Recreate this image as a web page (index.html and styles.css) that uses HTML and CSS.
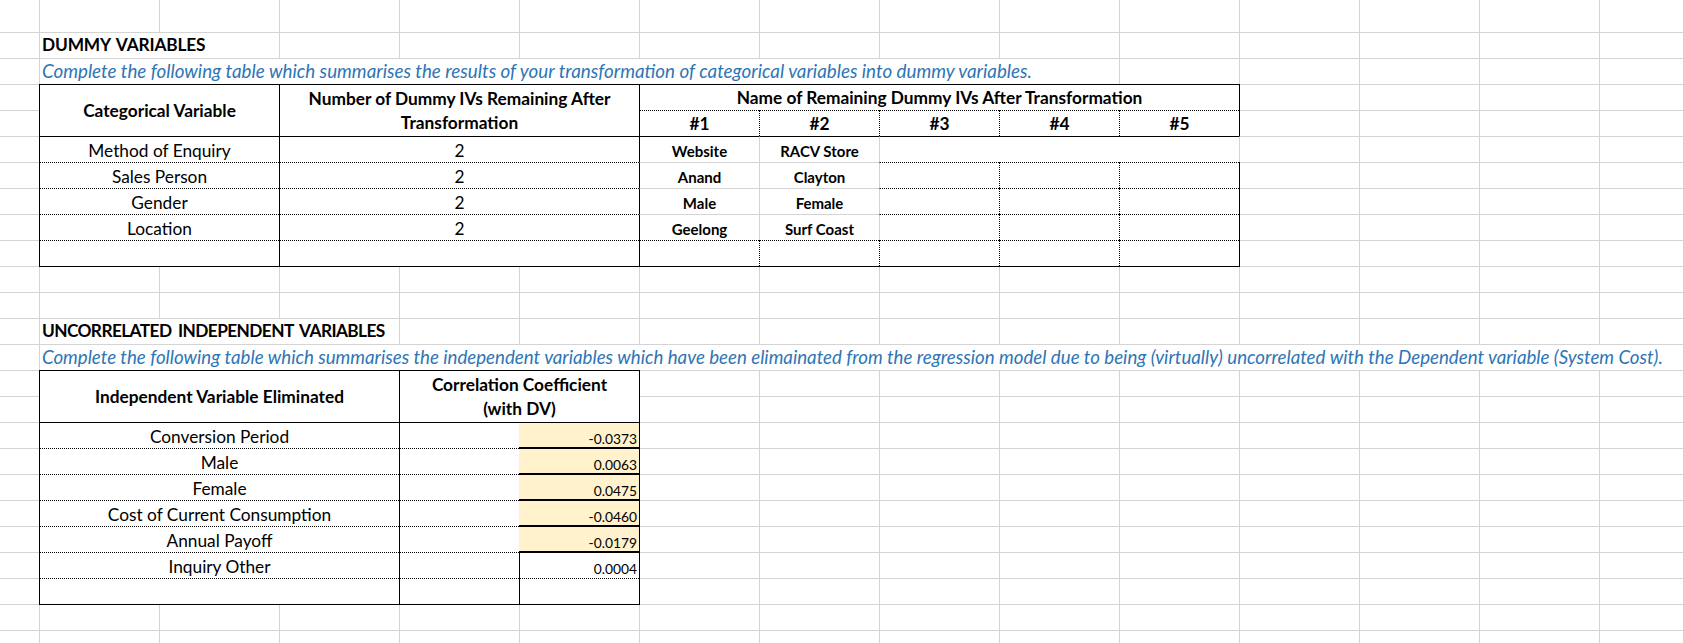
FILE: index.html
```html
<!DOCTYPE html>
<html lang="en">
<head>
<meta charset="utf-8">
<title>Dummy Variables</title>
<link rel="stylesheet" href="styles.css">
</head>
<body>
<div class="sheet">
  <div class="title title-1">DUMMY VARIABLES</div>
  <div class="note note-1">Complete the following table which summarises the results of your transformation of categorical variables into dummy variables.</div>

  <div class="tbl tbl-dummy">
    <div class="c hd h-cat">Categorical Variable</div>
    <div class="c hd h-num bl">Number of Dummy IVs Remaining After Transformation</div>
    <div class="c hd h-name bl">Name of Remaining Dummy IVs After Transformation</div>
    <div class="c hd idx bl bt-dot">#1</div>
    <div class="c hd idx bl-dot bt-dot">#2</div>
    <div class="c hd idx bl-dot bt-dot">#3</div>
    <div class="c hd idx bl-dot bt-dot">#4</div>
    <div class="c hd idx bl-dot bt-dot">#5</div>

    <div class="c bt">Method of Enquiry</div>
    <div class="c bt bl">2</div>
    <div class="c nm bt bl">Website</div>
    <div class="c nm bt bl-grid">RACV Store</div>
    <div class="c bt bl-grid span3 open-right"></div>

    <div class="c bt-dot">Sales Person</div>
    <div class="c bt-dot bl">2</div>
    <div class="c nm bt-grid bl">Anand</div>
    <div class="c nm bt-grid bl-grid">Clayton</div>
    <div class="c bt-dot bl-grid"></div>
    <div class="c bt-dot bl-dot"></div>
    <div class="c bt-dot bl-dot"></div>

    <div class="c bt-dot">Gender</div>
    <div class="c bt-dot bl">2</div>
    <div class="c nm bt-grid bl">Male</div>
    <div class="c nm bt-grid bl-grid">Female</div>
    <div class="c bt-dot bl-grid"></div>
    <div class="c bt-dot bl-dot"></div>
    <div class="c bt-dot bl-dot"></div>

    <div class="c bt-dot">Location</div>
    <div class="c bt-dot bl">2</div>
    <div class="c nm bt-grid bl">Geelong</div>
    <div class="c nm bt-grid bl-grid">Surf Coast</div>
    <div class="c bt-dot bl-grid"></div>
    <div class="c bt-dot bl-dot"></div>
    <div class="c bt-dot bl-dot"></div>

    <div class="c bt-dot"></div>
    <div class="c bt-dot bl"></div>
    <div class="c bt-dot bl"></div>
    <div class="c bt-dot bl-dot"></div>
    <div class="c bt-dot bl-dot"></div>
    <div class="c bt-dot bl-dot"></div>
    <div class="c bt-dot bl-dot"></div>
  </div>

  <div class="title title-2">UNCORRELATED INDEPENDENT VARIABLES</div>
  <div class="note note-2">Complete the following table which summarises the independent variables which have been elimainated from the regression model due to being (virtually) uncorrelated with the Dependent variable (System Cost).</div>

  <div class="tbl tbl-corr">
    <div class="c hd">Independent Variable Eliminated</div>
    <div class="c hd h-coef bl">Correlation Coefficient (with DV)</div>

    <div class="c bt">Conversion Period</div>
    <div class="c bt bl"></div>
    <div class="c num hl bt">-0.0373</div>

    <div class="c bt-dot">Male</div>
    <div class="c bt-dot bl"></div>
    <div class="c num hl bt-thick">0.0063</div>

    <div class="c bt-dot">Female</div>
    <div class="c bt-dot bl"></div>
    <div class="c num hl bt-thick">0.0475</div>

    <div class="c bt-dot">Cost of Current Consumption</div>
    <div class="c bt-dot bl"></div>
    <div class="c num hl bt-thick">-0.0460</div>

    <div class="c bt-dot">Annual Payoff</div>
    <div class="c bt-dot bl"></div>
    <div class="c num hl bt-thick">-0.0179</div>

    <div class="c bt-dot">Inquiry Other</div>
    <div class="c bt-dot bl"></div>
    <div class="c num bt-thick bl">0.0004</div>

    <div class="c bt-dot"></div>
    <div class="c bt-dot bl"></div>
    <div class="c bt-dot bl"></div>
  </div>
</div>
</body>
</html>
```

FILE: styles.css
```css
:root {
  --grid: #d4d4d4;
  --ink: #000000;
  --blue: #2e75b6;
  --gold: #fff2cc;
}

html, body {
  margin: 0;
  padding: 0;
  background: #ffffff;
}

body {
  font-family: Lato, "Liberation Sans", sans-serif;
  font-size: 17.3px;
  color: var(--ink);
  overflow: hidden;
}

.sheet {
  width: 1683px;
  height: 643px;
  box-sizing: border-box;
  overflow: hidden;
  padding-top: 32px;
  display: grid;
  grid-template-columns: 39px repeat(14, 120px);
  grid-template-rows: repeat(24, 26px);
  background-image:
    linear-gradient(to right, var(--grid) 1px, transparent 1px),
    linear-gradient(to bottom, var(--grid) 1px, transparent 1px);
  background-size: 120px 100%, 100% 26px;
  background-position: 39px 0, 0 0;
  background-origin: border-box, content-box;
  background-clip: border-box, content-box;
}

/* overflowing labels above each table */
.title,
.note {
  background: #ffffff;
  border-top: 1px solid var(--grid);
  border-left: 1px solid var(--grid);
  display: flex;
  align-items: flex-end;
  padding: 0 0 3px 2px;
  white-space: nowrap;
  line-height: 20px;
}

.title {
  font-weight: 700;
}

.title-1 {
  letter-spacing: -0.15px;
  word-spacing: 2px;
}

.title-2 {
  letter-spacing: -0.6px;
  word-spacing: 3px;
}

.note {
  font-style: italic;
  color: var(--blue);
  font-size: 18.8px;
  padding-bottom: 3px;
}

.note-2 {
  font-size: 18.7px;
}

.title-1 { grid-row: 1; grid-column: 2 / 4; }
.note-1  { grid-row: 2; grid-column: 2 / 11; }
.title-2 { grid-row: 12; grid-column: 2 / 5; }
.note-2  { grid-row: 13; grid-column: 2 / 16; }

/* tables */
.tbl {
  display: grid;
  background: #ffffff;
  border: 1px solid var(--ink);
  margin-right: -1px;
  margin-bottom: -1px;
}

.tbl-dummy {
  grid-row: 3 / 10;
  grid-column: 2 / 12;
  grid-template-columns: 239px 360px repeat(5, 120px);
  grid-template-rows: 25px repeat(6, 26px);
}

.tbl-corr {
  grid-row: 14 / 23;
  grid-column: 2 / 7;
  grid-template-columns: 359px 120px 120px;
  grid-template-rows: 51px repeat(7, 26px);
}

.c {
  display: flex;
  align-items: flex-end;
  justify-content: center;
  text-align: center;
  padding-bottom: 1.5px;
  line-height: 20px;
  white-space: nowrap;
  min-width: 0;
}

.hd {
  font-weight: 700;
  align-items: center;
  padding-bottom: 0;
  white-space: normal;
  line-height: 23.5px;
}

.h-cat { grid-row: 1 / 3; }
.h-num { grid-row: 1 / 3; }
.h-name { grid-column: 3 / 8; }
.idx { line-height: 20px; padding-top: 1px; }
.h-coef { grid-column: 2 / 4; padding: 0 14px; }

.nm {
  font-weight: 700;
  font-size: 15px;
}

.span3 { grid-column: 5 / 8; }
.open-right {
  margin-right: -1px;
  border-right: 1px solid var(--grid);
}

.num {
  justify-content: flex-end;
  font-size: 13.8px;
  line-height: 16px;
  padding: 0 2px 1px 0;
}

.hl { background: var(--gold); }

/* borders drawn on the top / left edge of each cell */
.bt { border-top: 1px solid var(--ink); }
.bt-dot { border-top: 1px dotted var(--ink); }
.bt-grid { border-top: 1px solid var(--grid); }
.bt-thick { border-top: 2px solid var(--ink); margin-top: -1px; }
.bl { border-left: 1px solid var(--ink); }
.bl-dot { border-left: 1px dotted var(--ink); }
.bl-grid { border-left: 1px solid var(--grid); }
```
